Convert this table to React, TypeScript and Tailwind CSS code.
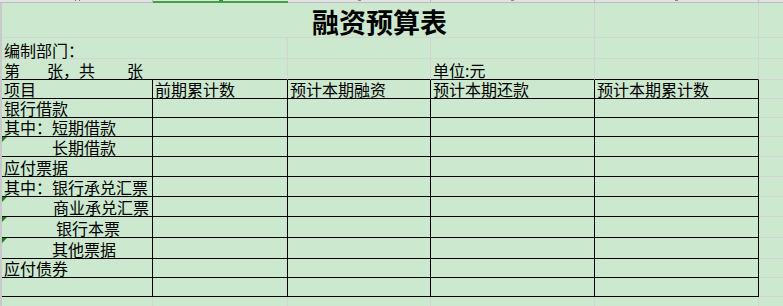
const cols = [
  { w: 'w-[151px]', mark: 'a' },
  { w: 'w-[135px]', mark: 'sel' },
  { w: 'w-[143px]', mark: 'bar' },
  { w: 'w-[164px]', mark: 'bar' },
  { w: 'w-[164px]', mark: 'bar' },
];

const rows = [
  { label: '项目', h: 'h-[19px]', head: ['前期累计数', '预计本期融资', '预计本期还款', '预计本期累计数'] },
  { label: '银行借款', h: 'h-[19px]' },
  { label: '其中：短期借款', h: 'h-[19px]' },
  { label: '长期借款', h: 'h-[20px]', pad: 'pl-[50px]', flag: true },
  { label: '应付票据', h: 'h-[20px]' },
  { label: '其中：银行承兑汇票', h: 'h-[20px]' },
  { label: '商业承兑汇票', h: 'h-[20px]', pad: 'pl-[51px]', flag: true },
  { label: '银行本票', h: 'h-[21px]', pad: 'pl-[54px]', flag: true },
  { label: '其他票据', h: 'h-[21px]', pad: 'pl-[50px]', flag: true },
  { label: '应付债券', h: 'h-[19px]' },
  { label: '', h: 'h-[19px]' },
];

const tcell = 'flex items-end border-r border-b border-black pb-[1px] whitespace-nowrap';
const gcell = 'flex items-end border-r border-b border-[#d3d3d3] whitespace-nowrap';

function Flag() {
  return (
    <svg className="absolute left-0 top-0" width="5" height="5" viewBox="0 0 5 5">
      <polygon points="0,0 5,0 0,5" fill="#1a801a" />
    </svg>
  );
}

export default function App() {
  return (
    <div className="w-[783px] h-[306px] overflow-hidden bg-[#cce8cf] text-black text-[16px] leading-none font-['Noto_Sans_CJK_SC','Noto_Sans',sans-serif]">
      {/* column header strip, mostly scrolled off */}
      <div className="flex h-[3px] bg-[#e2e2e2]">
        <div className="w-[2px] border-b border-[#bdbdbd]" />
        {cols.map((c, i) => (
          <div
            key={i}
            className={
              c.mark === 'sel'
                ? `${c.w} flex justify-center border-b-2 border-[#3fa33f]`
                : `${c.w} flex justify-center border-r border-b border-[#bdbdbd]`
            }
          >
            {c.mark === 'a' ? (
              <div className="flex gap-[3px]">
                <div className="w-[1px] h-[1px] bg-[#777]" />
                <div className="w-[1px] h-[1px] bg-[#777]" />
              </div>
            ) : c.mark === 'sel' ? (
              <div className="w-[4px] h-[1px] bg-[#3d8a3d]" />
            ) : (
              <div className="w-[3px] h-[1px] bg-[#888]" />
            )}
          </div>
        ))}
        <div className="flex-1 border-b border-[#bdbdbd]" />
      </div>

      <div className="border-l-2 border-[#c9c9c9]">
        {/* title row */}
        <div className="flex h-[35px]">
          <div className={`w-[593px] ${gcell} pl-[310px] pb-[2px]`}>
            <span className="text-[27px] font-bold tracking-[0px]">融资预算表</span>
          </div>
          <div className={`w-[164px] ${gcell}`} />
          <div className="flex-1 border-b border-[#d3d3d3]" />
        </div>

        {/* 编制部门 */}
        <div className="flex h-[21px]">
          <div className={`w-[286px] ${gcell} pl-[2px]`}>编制部门：</div>
          <div className={`w-[143px] ${gcell}`} />
          <div className={`w-[164px] ${gcell}`} />
          <div className={`w-[164px] ${gcell}`} />
          <div className="flex-1 border-b border-[#d3d3d3]" />
        </div>

        {/* 第 张 / 单位 */}
        <div className="flex h-[21px]">
          <div className={`w-[286px] flex items-end border-r border-[#d3d3d3] border-b border-b-black pl-[2px] pb-[1px] whitespace-nowrap`}>
            <span>第</span>
            <span className="ml-[27px]">张，共</span>
            <span className="ml-[32px]">张</span>
          </div>
          <div className="w-[143px] border-r border-[#d3d3d3] border-b border-b-black" />
          <div className="w-[164px] flex items-end border-r border-[#d3d3d3] border-b border-b-black pl-[2px] pb-[1px]">
            单位:元
          </div>
          <div className="w-[164px] border-r border-[#d3d3d3] border-b border-b-black" />
          <div className="flex-1 border-b border-[#d3d3d3]" />
        </div>

        {/* table */}
        {rows.map((r, i) => (
          <div key={i} className={`flex ${r.h}`}>
            <div className={`relative w-[151px] ${tcell} ${r.pad ?? 'pl-[2px]'}`}>
              {r.flag && <Flag />}
              {r.label}
            </div>
            <div className={`w-[135px] ${tcell} pl-[2px]`}>{r.head?.[0]}</div>
            <div className={`w-[143px] ${tcell} pl-[2px]`}>{r.head?.[1]}</div>
            <div className={`w-[164px] ${tcell} pl-[2px]`}>{r.head?.[2]}</div>
            <div className={`w-[164px] ${tcell} pl-[2px]`}>{r.head?.[3]}</div>
            <div className="flex-1 border-b border-[#d3d3d3]" />
          </div>
        ))}

        {/* next empty row */}
        <div className="flex h-[12px]">
          <div className="w-[151px] border-r border-[#d3d3d3]" />
          <div className="w-[135px] border-r border-[#d3d3d3]" />
          <div className="w-[143px] border-r border-[#d3d3d3]" />
          <div className="w-[164px] border-r border-[#d3d3d3]" />
          <div className="w-[164px] border-r border-[#d3d3d3]" />
          <div className="flex-1" />
        </div>
      </div>
    </div>
  );
}
